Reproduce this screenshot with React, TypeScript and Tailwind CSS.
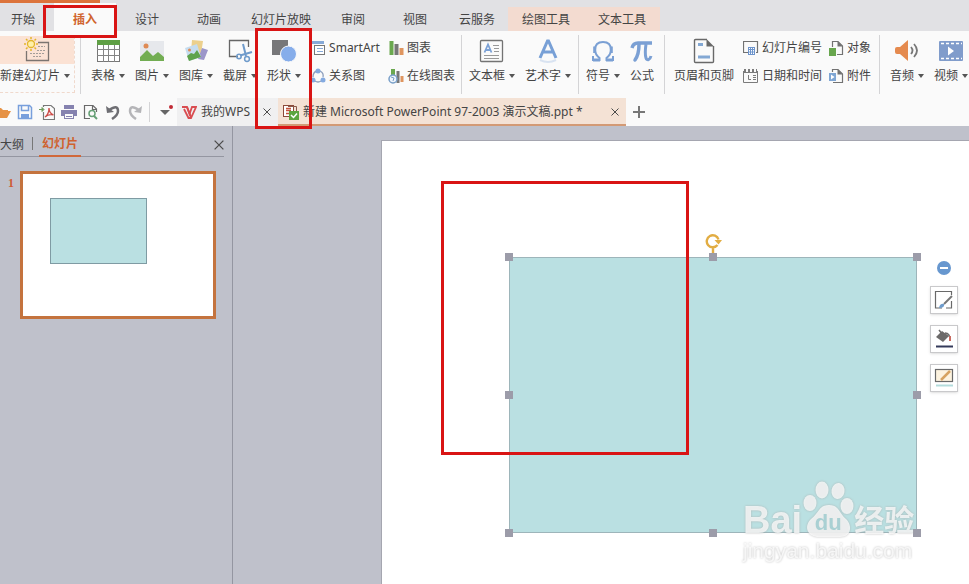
import { useState } from "react";
import type { ReactNode } from "react";
import clsx from "clsx";

const menuTabs = ["开始", "插入", "设计", "动画", "幻灯片放映", "审阅", "视图", "云服务"];
const toolTabs = ["绘图工具", "文本工具"];

const handles = [
  "-left-[5px] -top-[5px]",
  "left-1/2 -ml-1 -top-[5px]",
  "-right-[5px] -top-[5px]",
  "-left-[5px] top-1/2 -mt-1",
  "-right-[5px] top-1/2 -mt-1",
  "-left-[5px] -bottom-[5px]",
  "left-1/2 -ml-1 -bottom-[5px]",
  "-right-[5px] -bottom-[5px]",
];

function Svg({ w = 16, h = 16, children }: { w?: number; h?: number; children: ReactNode }) {
  return (
    <svg width={w} height={h} viewBox={`0 0 ${w} ${h}`} fill="none" className="shrink-0" aria-hidden="true">
      {children}
    </svg>
  );
}

/* ---- Large ribbon icons ---- */

const NewSlideIcon = () => (
  <Svg w={26} h={26}>
    <path d="M14 5.500H24.500V23.500H2.500V14" stroke="#7b7470" strokeWidth="1.300" />
    <path d="M14 9.500H21M13 13.500H21M6 16.500H21M9 19.500H18" stroke="#a39d99" strokeDasharray="2 1" />
    <circle cx="7" cy="7" r="3.500" fill="#fff0a8" stroke="#e3b52c" strokeWidth="1.300" />
    <path
      d="M7 0V2M7 12V14M0 7H2M12 7H14M2 2L3.500 3.500M10.500 10.500L12 12M12 2L10.500 3.500M2 12L3.500 10.500"
      stroke="#e3b52c"
      strokeWidth="1.500"
    />
  </Svg>
);

const TableIcon = () => (
  <Svg w={26} h={26}>
    <rect x="2.500" y="2.500" width="22" height="21" fill="#fff" stroke="#777" />
    <rect x="2" y="2" width="23" height="5" fill="#5f9f45" />
    <path d="M2 11.500H25M2 17.500H25M8.500 7V24M13.500 7V24M19.500 7V24" stroke="#858585" />
  </Svg>
);

const PictureIcon = () => (
  <Svg w={26} h={26}>
    <rect x="1" y="3" width="24" height="20" fill="#e6e8ec" />
    <circle cx="7" cy="8" r="2.500" fill="#df8b55" />
    <path d="M1 23V19L8 12L14 18L19 14L25 19V23Z" fill="#72ad52" />
  </Svg>
);

const GalleryIcon = () => (
  <Svg w={26} h={26}>
    <path d="M9 2L20 3L18 16L8 14Z" fill="#ecd08d" />
    <path d="M19 10L25 12L21 22L15 21Z" fill="#9c96ca" />
    <path d="M2 10L14 6L18 19L6 23Z" fill="#c5dcef" />
    <circle cx="6.500" cy="12" r="1.500" fill="#df8b55" />
    <path d="M4 18L8 15L11 16L14 12L17 17L18 19L6 23Z" fill="#5fa34c" />
  </Svg>
);

const ScreenshotIcon = () => (
  <Svg w={26} h={26}>
    <path d="M11 18.500H2.500V2.500H21.500V9" stroke="#666" strokeWidth="1.300" />
    <path d="M16 6L19 18M25 14L13 17.500" stroke="#6f9bcb" strokeWidth="2" />
    <circle cx="12" cy="18.500" r="2.200" stroke="#6f9bcb" strokeWidth="1.500" />
    <circle cx="20" cy="21" r="2.400" stroke="#6f9bcb" strokeWidth="1.500" />
  </Svg>
);

const ShapesIcon = () => (
  <Svg w={26} h={26}>
    <rect x="1" y="2" width="16" height="15" fill="#777779" />
    <circle cx="17.500" cy="16" r="8" fill="#86adea" stroke="#fafafa" />
  </Svg>
);

const TextBoxIcon = () => (
  <Svg w={26} h={26}>
    <rect x="1.500" y="2.500" width="22" height="21" rx="1" stroke="#737373" strokeWidth="1.300" />
    <path d="M5.500 14.500L9 6.500L12.500 14.500M6.500 12H11.500" stroke="#7ba1d6" strokeWidth="1.800" />
    <path d="M14 7.500H20M15 10.500H20M15 13.500H20M5 17.500H20M5 20.500H20" stroke="#999" />
  </Svg>
);

const WordArtIcon = () => (
  <Svg w={26} h={26}>
    <path d="M5 20L12.500 3H13.500L21 20M8 14H18" stroke="#78a0d6" strokeWidth="3" />
    <path d="M5 22Q13 26 21 22" stroke="#d9e3f1" strokeWidth="2" />
  </Svg>
);

const SymbolIcon = () => (
  <Svg w={26} h={26}>
    <path d="M3 18V22H9.500V20C6.500 17.500 5 15 5 12C5 7 8 4 13 4C18 4 21 7 21 12C21 15 19.500 17.500 16.500 20V22H23V18" stroke="#7ba0d4" strokeWidth="2" />
    <path d="M4.700 8.500V15M21.300 8.500V15M3 22H10M16 22H23" stroke="#7ba0d4" strokeWidth="3" />
  </Svg>
);

const FormulaIcon = () => (
  <Svg w={24} h={26}>
    <path d="M2 10C3 6 5 5 8 5H22" stroke="#7ba0d4" strokeWidth="3.500" />
    <path d="M9 6C9 13 8 18 5 22" stroke="#7ba0d4" strokeWidth="3.500" strokeLinecap="round" />
    <path d="M16 6C15 13 15 17 16 20C17 23 20 22 21 18" stroke="#7ba0d4" strokeWidth="3" />
  </Svg>
);

const HeaderFooterIcon = () => (
  <Svg w={26} h={26}>
    <path d="M16 1.500H4.500Q3.500 1.500 3.500 2.500V23.500Q3.500 24.500 4.500 24.500H21.500Q22.500 24.500 22.500 23.500V8" stroke="#696969" strokeWidth="1.400" />
    <path d="M15.500 1L23 8.500H15.500Z" fill="#696969" />
    <path d="M7 6.500H12M7 19H19" stroke="#83a8d4" strokeWidth="3" />
  </Svg>
);

const AudioIcon = () => (
  <Svg w={26} h={26}>
    <path d="M1 11Q1 9 3 9H6L14 2V23L6 16H3Q1 16 1 14Z" fill="#e58a4e" />
    <path d="M17 9Q20 12.500 17 16M20 6Q26 12.500 20 19" stroke="#777" strokeWidth="1.800" />
  </Svg>
);

const VideoIcon = () => (
  <Svg w={26} h={26}>
    <rect x="1" y="3" width="24" height="20" rx="1" fill="#809ccb" />
    <path d="M3 5.500H24M3 20.500H24" stroke="#fff" strokeWidth="1.500" strokeDasharray="3 2" />
    <path d="M10 8.500L16 13L10 17.500Z" fill="#fff" />
  </Svg>
);

/* ---- Small ribbon icons ---- */

const SmartArtIcon = () => (
  <Svg>
    <path d="M2 2.500H14" stroke="#86a9d8" strokeWidth="3" />
    <rect x="4.500" y="5.500" width="10" height="9" fill="#fff" stroke="#777" />
    <path d="M7 8.500H13M7 11.500H13" stroke="#86a9d8" />
  </Svg>
);

const RelationIcon = () => (
  <Svg>
    <path d="M3 9Q3 4 7 3M10 3Q14 5 13 9M5 13Q8 15 11 13" stroke="#8b9dbb" strokeWidth="1.300" />
    <circle cx="8" cy="3" r="2.500" fill="#84aae0" />
    <circle cx="3" cy="12" r="2.500" fill="#84aae0" />
    <circle cx="13" cy="12" r="2.500" fill="#84aae0" />
  </Svg>
);

const ChartIcon = () => (
  <Svg>
    <path d="M3.500 1V15" stroke="#6aa84f" strokeWidth="4" />
    <path d="M8.500 4V15" stroke="#777" strokeWidth="4" />
    <path d="M13.500 8V15" stroke="#df955f" strokeWidth="4" />
  </Svg>
);

const OnlineChartIcon = () => (
  <Svg>
    <path d="M5 1V8" stroke="#6aa84f" strokeWidth="4" />
    <path d="M10 3V15" stroke="#777" strokeWidth="3" />
    <path d="M14 8V14" stroke="#df955f" strokeWidth="3" />
    <circle cx="5" cy="11" r="4" fill="#eef4fb" stroke="#789fc8" strokeWidth="1.500" />
    <path d="M3 9L6 10L5 13" stroke="#789fc8" />
  </Svg>
);

const SlideNumberIcon = () => (
  <Svg>
    <path d="M5 12.500H0.500V1.500H14.500V12.500H13" stroke="#727272" strokeWidth="1.200" />
    <rect x="5.500" y="7.500" width="6" height="7" fill="#fff" stroke="#6d94cc" />
    <path d="M7.500 7V15M9.500 7V15M5 9.500H12M5 12H12" stroke="#6d94cc" />
  </Svg>
);

const DateIcon = () => (
  <Svg>
    <path d="M0.500 3V14.500H14.500V3M0 4.500H15" stroke="#7b7b7b" />
    <path d="M1 2.500H14" stroke="#7b7b7b" strokeWidth="3" strokeDasharray="2 2" />
    <path d="M5.500 7V11.500H8M10 7.500H13M10 9.500H13M10 11.500H13" stroke="#7b7b7b" />
  </Svg>
);

const ObjectIcon = () => (
  <Svg>
    <path d="M4.500 7V1.500H10L14.500 6V14.500H9" stroke="#727272" strokeWidth="1.200" />
    <path d="M9.500 1L15 6.500H9.500Z" fill="#727272" />
    <rect x="1" y="8" width="7" height="8" fill="#68a64e" />
  </Svg>
);

const AttachmentIcon = () => (
  <Svg>
    <path d="M4.500 4V1.500H10L14.500 6V14.500H5" stroke="#727272" strokeWidth="1.200" />
    <path d="M9.500 1L15 6.500H9.500Z" fill="#727272" />
    <rect x="1" y="5" width="7" height="8" fill="#7fa6d4" />
    <path d="M3 6.500L6.500 9L3 11.500Z" fill="#fff" />
  </Svg>
);

/* ---- Quick access icons ---- */

const quickActions = [
  {
    label: "打开",
    icon: <path d="M0 4H6L8 6H13V9H0ZM2 14L5 7H16L12 14Z" fill="#e69245" />,
  },
  {
    label: "保存",
    icon: (
      <>
        <path d="M1.500 1.500H12.500L14.500 3.500V14.500H1.500Z" stroke="#789fdc" strokeWidth="1.500" />
        <path d="M4.500 2V6.500H11.500V2" stroke="#789fdc" strokeWidth="1.500" />
        <path d="M4 12H12" stroke="#789fdc" strokeWidth="4" />
      </>
    ),
  },
  {
    label: "输出为PDF",
    icon: (
      <>
        <path d="M4.500 8V15.500H15.500V4.500L12 1.500H4.500V3" stroke="#777" strokeWidth="1.200" />
        <path d="M6 13Q10 10 10 4Q10 9 14.500 11Q10 9.500 6 13Z" stroke="#cc4c48" strokeWidth="1.300" />
        <path d="M0 5.500H4M3 3.500L5 5.500L3 7.500Z" stroke="#6c9b5a" fill="#6c9b5a" />
      </>
    ),
  },
  {
    label: "打印",
    icon: (
      <>
        <rect x="3" y="1" width="10" height="4" fill="#8582af" />
        <rect x="0" y="6" width="16" height="6" fill="#8582af" />
        <rect x="3.500" y="9.500" width="9" height="5" fill="#fafafa" stroke="#8582af" />
        <path d="M5 12.500H11" stroke="#8582af" />
      </>
    ),
  },
  {
    label: "打印预览",
    icon: (
      <>
        <path d="M7 14.500H1.500V1.500H10L13.500 5V8M9.500 1V5.500H14" stroke="#696969" strokeWidth="1.200" />
        <circle cx="9" cy="9.500" r="3" stroke="#66a075" strokeWidth="1.500" />
        <path d="M11 12L14 15" stroke="#66a075" strokeWidth="2" />
      </>
    ),
  },
  {
    label: "撤销",
    icon: (
      <>
        <path d="M4 6Q13 0 13 7Q13 11 7 15" stroke="#6e6e73" strokeWidth="2.500" />
        <path d="M1 2L2 9L9 8Z" fill="#6e6e73" />
      </>
    ),
  },
  {
    label: "恢复",
    icon: (
      <>
        <path d="M12 6Q3 0 3 7Q3 11 9 15" stroke="#b5b5b8" strokeWidth="2.500" />
        <path d="M15 2L14 9L7 8Z" fill="#b5b5b8" />
      </>
    ),
  },
];

function Caret() {
  return <span className="border-x-[3px] border-t-4 border-x-transparent border-t-[#555]" />;
}

function BigButton({ label, icon, caret = true }: { label: string; icon: ReactNode; caret?: boolean }) {
  return (
    <button className="flex shrink-0 flex-col items-center px-[5px] pt-[7px]">
      <span className="flex h-[26px] items-center">{icon}</span>
      <span className="flex h-6 items-center gap-1">
        {label}
        {caret && <Caret />}
      </span>
    </button>
  );
}

function SmallButton({ label, icon }: { label: string; icon: ReactNode }) {
  return (
    <button className="flex h-7 items-center gap-[3px]">
      {icon}
      {label}
    </button>
  );
}

function SmallColumn({ children }: { children: ReactNode }) {
  return <div className="flex shrink-0 flex-col pt-[3px]">{children}</div>;
}

function Divider({ className }: { className: string }) {
  return <div className={clsx("my-1 w-px shrink-0 bg-[#d4d4d6]", className)} />;
}

function CloseIcon({ size = 8 }: { size?: number }) {
  return (
    <svg width={size} height={size} viewBox="0 0 8 8" stroke="#4b4b4b" fill="none" aria-hidden="true">
      <path d="M0.500 0.500L7.500 7.500M7.500 0.500L0.500 7.500" />
    </svg>
  );
}

function Ribbon() {
  return (
    <div className="flex h-[67px] overflow-hidden">
      <button className="my-[5px] flex w-[75px] shrink-0 flex-col items-center border-b border-r border-dashed border-[#f0d9cc]">
        <span className="flex h-7 w-full items-center justify-center bg-[#fbe2d4]">
          <NewSlideIcon />
        </span>
        <span className="flex h-6 items-center gap-1 self-start">
          新建幻灯片
          <Caret />
        </span>
      </button>
      <Divider className="mx-[5px]" />
      <BigButton label="表格" icon={<TableIcon />} />
      <BigButton label="图片" icon={<PictureIcon />} />
      <BigButton label="图库" icon={<GalleryIcon />} />
      <BigButton label="截屏" icon={<ScreenshotIcon />} />
      <BigButton label="形状" icon={<ShapesIcon />} />
      <div className="ml-1 flex shrink-0 gap-2">
        <SmallColumn>
          <SmallButton label="SmartArt" icon={<SmartArtIcon />} />
          <SmallButton label="关系图" icon={<RelationIcon />} />
        </SmallColumn>
        <SmallColumn>
          <SmallButton label="图表" icon={<ChartIcon />} />
          <SmallButton label="在线图表" icon={<OnlineChartIcon />} />
        </SmallColumn>
      </div>
      <Divider className="ml-1.5 mr-0.5" />
      <BigButton label="文本框" icon={<TextBoxIcon />} />
      <BigButton label="艺术字" icon={<WordArtIcon />} />
      <Divider className="mx-0.5" />
      <BigButton label="符号" icon={<SymbolIcon />} />
      <BigButton label="公式" caret={false} icon={<FormulaIcon />} />
      <Divider className="ml-[5px] mr-1" />
      <BigButton label="页眉和页脚" caret={false} icon={<HeaderFooterIcon />} />
      <div className="ml-1 flex shrink-0 gap-1.5">
        <SmallColumn>
          <SmallButton label="幻灯片编号" icon={<SlideNumberIcon />} />
          <SmallButton label="日期和时间" icon={<DateIcon />} />
        </SmallColumn>
        <SmallColumn>
          <SmallButton label="对象" icon={<ObjectIcon />} />
          <SmallButton label="附件" icon={<AttachmentIcon />} />
        </SmallColumn>
      </div>
      <Divider className="ml-2 mr-[5px]" />
      <BigButton label="音频" icon={<AudioIcon />} />
      <BigButton label="视频" icon={<VideoIcon />} />
    </div>
  );
}

function DocumentBar() {
  return (
    <div className="flex h-7 items-stretch">
      <div className="-ml-2 flex">
        {quickActions.map((action) => (
          <button key={action.label} aria-label={action.label} className="flex w-[22px] items-center justify-center">
            <Svg>{action.icon}</Svg>
          </button>
        ))}
      </div>
      <div className="mx-[3px] my-1 w-px bg-[#d4d4d6]" />
      <button aria-label="自定义快速访问工具栏" className="flex w-6 items-center justify-center">
        <Svg>
          <path d="M3 6H13L8 11Z" fill="#666" />
          <circle cx="14" cy="3" r="2" fill="#c02a35" />
        </Svg>
      </button>
      <div className="flex w-[101px] items-center gap-1 bg-[#f0f0f1] pl-1">
        <Svg>
          <path d="M1 3H6L8.500 10L11 3H15L10 14H7.500L3 5" stroke="#d94c50" strokeWidth="1.800" />
          <path d="M6 3L10 13" stroke="#d94c50" strokeWidth="2" />
        </Svg>
        <span className="flex-1">我的WPS</span>
        <button aria-label="关闭" className="px-[7px]">
          <CloseIcon />
        </button>
      </div>
      <div className="flex w-[348px] items-center gap-1 border-b-2 border-[#d39a75] bg-[#f4e2d5] pl-[5px] pt-0.5">
        <Svg>
          <rect x="0.500" y="1.500" width="10" height="11" fill="#fff" stroke="#8b4a3a" />
          <path d="M3 4.500H8M3 6.500H8M3 9.500H6" stroke="#c4543c" strokeWidth="1.500" />
          <path d="M5 2.500H13.500V8" stroke="#8b5a4a" />
          <rect x="6" y="7" width="10" height="9" fill="#5da53f" />
          <path d="M8 11L10.500 13.500L14 9.500" stroke="#fff" strokeWidth="1.500" />
        </Svg>
        <span className="flex-1 whitespace-nowrap">新建 Microsoft PowerPoint 97-2003 演示文稿.ppt *</span>
        <button aria-label="关闭文稿" className="px-[7px]">
          <CloseIcon />
        </button>
      </div>
      <button aria-label="新建文稿" className="flex w-[26px] items-center justify-center">
        <Svg>
          <path d="M8 2V14M2 8H14" stroke="#777" strokeWidth="2" />
        </Svg>
      </button>
    </div>
  );
}

function SlidePanel() {
  return (
    <aside className="w-[233px] shrink-0 border-r border-[#9496a1] pt-[3px]">
      <div className="mr-2 flex h-7 items-stretch border-b border-[#9496a1]">
        <button className="pt-1">大纲</button>
        <span className="mb-1.5 ml-2 mr-1.5 mt-2 w-px bg-[#777]" />
        <button className="-mb-px border-b-2 border-[#d0683a] px-[3px] pt-1 font-bold text-[#cf622f]">幻灯片</button>
        <button aria-label="关闭面板" className="ml-auto pt-1">
          <CloseIcon size={10} />
        </button>
      </div>
      <div className="mt-[14px] flex">
        <span className="w-5 pl-2 pt-1 font-['Liberation_Serif',serif] font-bold text-[#cf5c35]">1</span>
        <div className="h-[148px] w-[196px] border-[3px] border-[#c4733e] bg-white pl-[27px] pt-6">
          <div className="h-[66px] w-[97px] border border-[#7f9ba3] bg-[#bae0e2]" />
        </div>
      </div>
    </aside>
  );
}

function FormatToolbar() {
  const item = "flex size-7 items-center justify-center border border-[#c9c9cb] bg-white shadow-sm";
  return (
    <div className="absolute left-[548px] top-[120px] flex flex-col items-center gap-[11px]">
      <button aria-label="收起" className="h-[14px]">
        <Svg w={14} h={14}>
          <circle cx="7" cy="7" r="7" fill="#6797cf" />
          <path d="M3 7H11" stroke="#fff" strokeWidth="2" />
        </Svg>
      </button>
      <button aria-label="形状样式" className={item}>
        <Svg w={20} h={20}>
          <path d="M8 18H1.500V1.500H17.500V5M17.500 11V18H12" stroke="#696969" strokeWidth="1.200" />
          <path d="M18 6L10 14" stroke="#777" strokeWidth="2" />
          <path d="M5 18Q6 13 10 14Q11 18 5 18Z" fill="#6f9ccc" />
        </Svg>
      </button>
      <button aria-label="形状填充" className={item}>
        <Svg w={20} h={20}>
          <path d="M2 8L8 2L15 7L9 13Z" fill="#6c6a6a" />
          <path d="M5 1L9 6M11 4Q16 4 16 11" stroke="#6c6a6a" strokeWidth="1.500" />
          <path d="M16 7V12" stroke="#c96b61" strokeWidth="2" />
          <path d="M2 17.500H19" stroke="#343a5a" strokeWidth="2" />
        </Svg>
      </button>
      <button aria-label="形状轮廓" className={item}>
        <Svg w={20} h={20}>
          <rect x="1.500" y="1.500" width="17" height="12" fill="#fdf3df" stroke="#696969" strokeWidth="1.200" />
          <path d="M16 3L7 12" stroke="#d7a361" strokeWidth="2.500" />
          <path d="M2 17.500H19" stroke="#b4dcdc" strokeWidth="2" />
        </Svg>
      </button>
    </div>
  );
}

function Watermark() {
  return (
    <div className="absolute left-[361px] top-[336px] text-white/75 drop-shadow-[0_0_1px_#aaa]">
      <div className="flex items-end font-bold">
        <span className="font-['Liberation_Sans',sans-serif] text-[38px] leading-[38px]">Bai</span>
        <div className="relative h-[62px] w-[52px]">
          <svg width="52" height="62" viewBox="0 0 52 62" fill="currentColor" aria-hidden="true">
            <ellipse cx="8" cy="26" rx="6.500" ry="8" />
            <ellipse cx="20" cy="13" rx="6.500" ry="8.500" />
            <ellipse cx="36" cy="14" rx="6.500" ry="8" transform="rotate(8 36 14)" />
            <ellipse cx="45" cy="29" rx="6.500" ry="8" />
            <path d="M27 28C17 28 17 36 9 42C1 50 6 60 17 60H38C49 60 51 49 44 42C37 36 37 28 27 28Z" />
          </svg>
          <span className="absolute inset-x-0 bottom-1 text-center font-['Liberation_Sans',sans-serif] text-[22px] leading-6 text-[#a9d0d3]">
            du
          </span>
        </div>
        <span className="text-[30px] leading-[38px]">经验</span>
      </div>
      <div className="-mt-0.5 font-['Liberation_Sans',sans-serif] text-[21px] leading-7">jingyan.baidu.com</div>
    </div>
  );
}

function Slide() {
  return (
    <main className="relative ml-[148px] mt-[14px] flex-1 overflow-hidden border-l border-t border-[#a5a6b0] bg-white">
      <div className="absolute left-[127px] top-[116px] h-[276px] w-[408px] border border-[#9db5ba] bg-[#bae0e2]">
        {handles.map((position) => (
          <span key={position} className={clsx("absolute size-2 bg-[#9c9ca9]", position)} />
        ))}
        <span className="absolute -top-6 left-1/2 -ml-2">
          <Svg w={18} h={20}>
            <path d="M12.500 11A6 6 0 1 1 13.500 5.500M8 14V19" stroke="#e2ad43" strokeWidth="2.400" />
            <path d="M9.500 6H17L13.500 10.500Z" fill="#e2ad43" />
          </Svg>
        </span>
      </div>
      <FormatToolbar />
      <Watermark />
    </main>
  );
}

export default function App() {
  const [activeTab, setActiveTab] = useState("插入");

  return (
    <div className="relative flex min-h-screen flex-col overflow-hidden bg-[#bfc1cb] font-['Noto_Sans','Noto_Sans_CJK_SC',sans-serif] text-xs text-[#444]">
      <header className="bg-[#fafafa]">
        {/* Menu tabs */}
        <div className="bg-[#e1e1e4]">
          <div className="h-[3px] w-[100px] bg-[#dc733b]" />
          <nav className="-ml-2 flex h-7 items-stretch">
            {menuTabs.map((tab) => (
              <button
                key={tab}
                onClick={() => setActiveTab(tab)}
                className={clsx(
                  "min-w-[62px] px-[11px] pt-1.5",
                  tab === activeTab && "bg-[#fafafa] font-bold text-[#d0642d]"
                )}
              >
                {tab}
              </button>
            ))}
            {toolTabs.map((tab) => (
              <button key={tab} className="mt-1 bg-[#f3dbd0] px-[14px] pt-0.5">
                {tab}
              </button>
            ))}
          </nav>
        </div>
        <Ribbon />
        <DocumentBar />
      </header>

      <div className="flex flex-1">
        <SlidePanel />
        <Slide />
      </div>

      {/* Callout frames */}
      <div className="pointer-events-none absolute left-[43px] top-[5px] h-[33px] w-[74px] border-[3px] border-[#d91414]" />
      <div className="pointer-events-none absolute left-[255px] top-7 h-[101px] w-[57px] border-[3px] border-[#d91414]" />
      <div className="pointer-events-none absolute left-[441px] top-[181px] h-[274px] w-[248px] border-[3px] border-[#d91414]" />
    </div>
  );
}
